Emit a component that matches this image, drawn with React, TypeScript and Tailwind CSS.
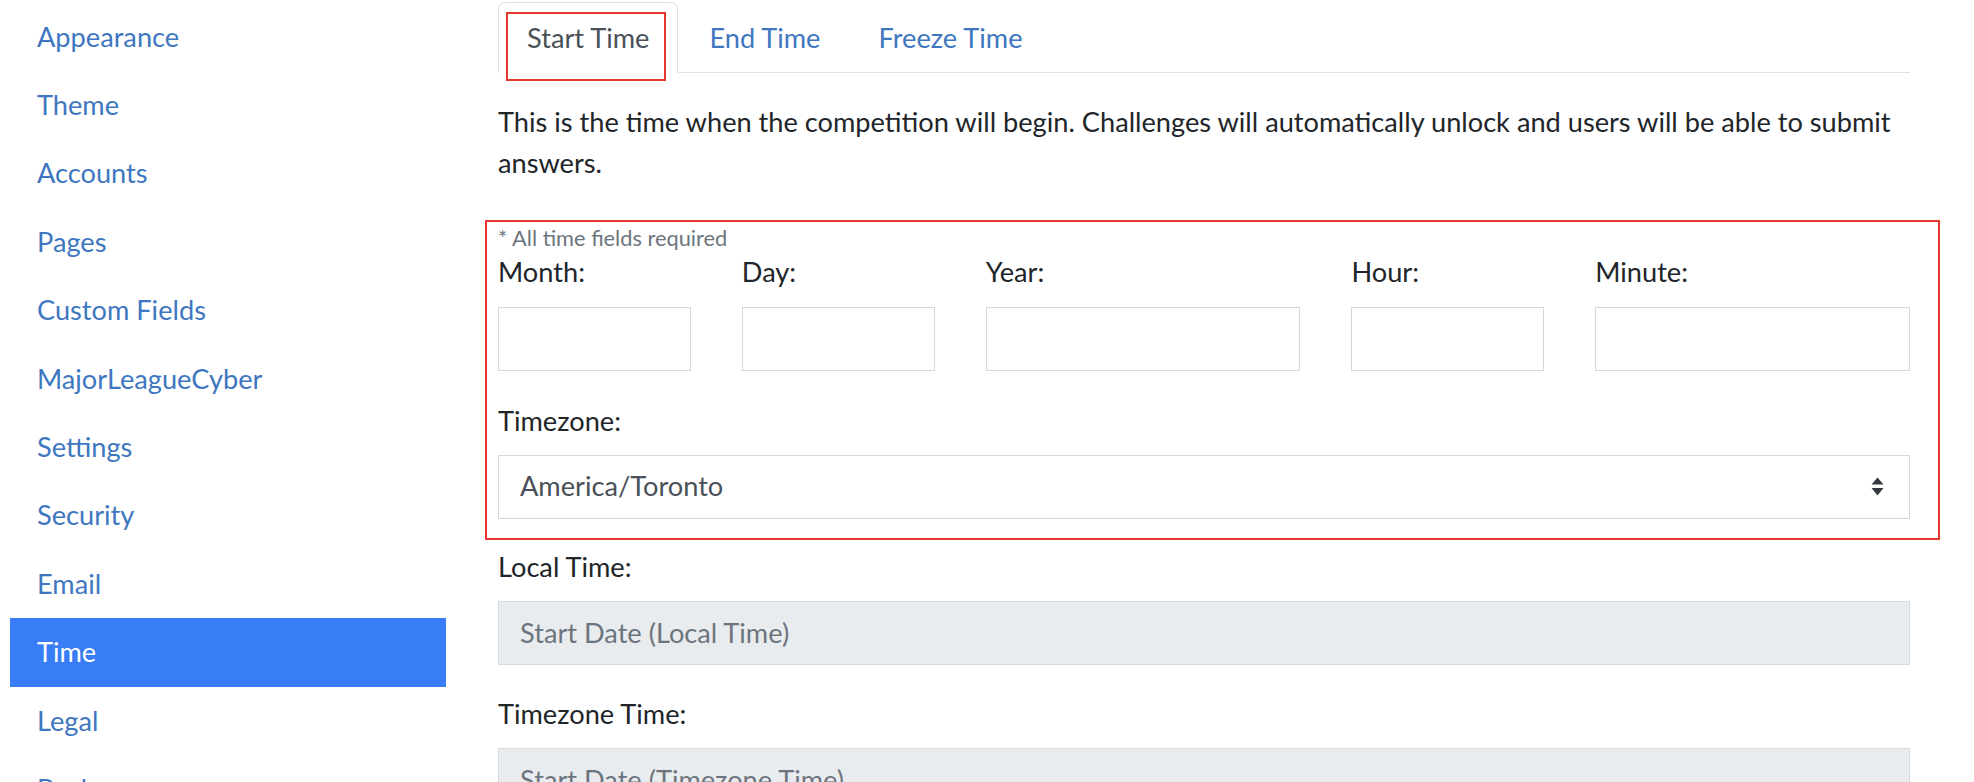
import React from 'react';

const navItems = [
  'Appearance',
  'Theme',
  'Accounts',
  'Pages',
  'Custom Fields',
  'MajorLeagueCyber',
  'Settings',
  'Security',
  'Email',
  'Time',
  'Legal',
  'Backup',
];

const fields = [
  { label: 'Month:', span: 'col-span-2' },
  { label: 'Day:', span: 'col-span-2' },
  { label: 'Year:', span: 'col-span-3' },
  { label: 'Hour:', span: 'col-span-2' },
  { label: 'Minute:', span: 'col-span-3' },
];

function SelectArrows() {
  return (
    <svg width="13" height="19" viewBox="0 0 13 19" className="shrink-0">
      <path d="M0.5 7.5 L6.5 0.5 L12.5 7.5 Z" fill="#343a40" />
      <path d="M0.5 11 L6.5 18.5 L12.5 11 Z" fill="#343a40" />
    </svg>
  );
}

function App() {
  const active = 'Time';

  return (
    <div className="h-[782px] w-full overflow-hidden bg-white font-['Lato',sans-serif] text-[27.2px] text-[#212529]">
      <div className="flex pl-[10px]">
        {/* Sidebar */}
        <nav className="w-[436px] shrink-0 pt-[2.8px]">
          {navItems.map((item) => (
            <div
              key={item}
              className={`flex h-[68.4px] items-center px-[27px] leading-[40.8px] ${
                item === active ? 'bg-[#387df6] text-white' : 'text-[#3e77c0]'
              }`}
            >
              {item}
            </div>
          ))}
        </nav>

        {/* Content */}
        <main className="ml-[52px] w-[1412px] shrink-0 pt-[2px]">
          {/* Tabs */}
          <div className="flex border-b border-[#dee2e6]">
            <div className="relative -mb-px flex h-[71px] items-center rounded-t-[7px] border border-b-white border-[#dee2e6] bg-white px-[28px] pt-[2px] text-[#495057]">
              Start Time
              <span className="pointer-events-none absolute left-[7px] right-[11px] top-[9px] bottom-[-9px] border-2 border-[#e5372b]"></span>
            </div>
            <div className="flex h-[70px] items-center pl-[31px] pr-[29px] pt-[2px] text-[#3e77c0]">End Time</div>
            <div className="flex h-[70px] items-center px-[29px] pt-[2px] text-[#3e77c0]">Freeze Time</div>
          </div>

          <p className="mt-[29px] leading-[40.8px]">
            This is the time when the competition will begin. Challenges will automatically unlock and users will be able
            to submit answers.
          </p>

          {/* Required time fields */}
          <div className="relative mt-[40.4px]">
            <span className="pointer-events-none absolute -left-[13px] -right-[30px] -top-[4px] -bottom-[21px] border-2 border-[#e5372b]"></span>
            <div className="mt-[2px] text-[21.8px] leading-[28px] text-[#6c757d]">* All time fields required</div>
            <div className="grid grid-cols-12 gap-x-[51px]">
              {fields.map((f) => (
                <div key={f.label} className={f.span}>
                  <div className="mb-[14.4px] leading-[40.8px]">{f.label}</div>
                  <div className="h-[64px] border border-[#d3d8dd] bg-white"></div>
                </div>
              ))}
            </div>

            <div className="mt-[30.2px] mb-[12.6px] leading-[40.8px]">Timezone:</div>
            <div className="flex h-[64px] items-center justify-between border border-[#d3d8dd] bg-white pl-[21px] pr-[25px] text-[#495057]">
              <span>America/Toronto</span>
              <SelectArrows />
            </div>
          </div>

          <div className="mt-[28px] mb-[13.6px] leading-[40.8px]">Local Time:</div>
          <div className="flex h-[64px] items-center border border-[#d6dade] bg-[#e9ecef] pl-[21px] text-[#6c757d]">
            Start Date (Local Time)
          </div>

          <div className="mt-[28.6px] mb-[13.6px] leading-[40.8px]">Timezone Time:</div>
          <div className="flex h-[64px] items-center border border-[#d6dade] bg-[#e9ecef] pl-[21px] text-[#6c757d]">
            Start Date (Timezone Time)
          </div>
        </main>
      </div>
    </div>
  );
}

export default App;
